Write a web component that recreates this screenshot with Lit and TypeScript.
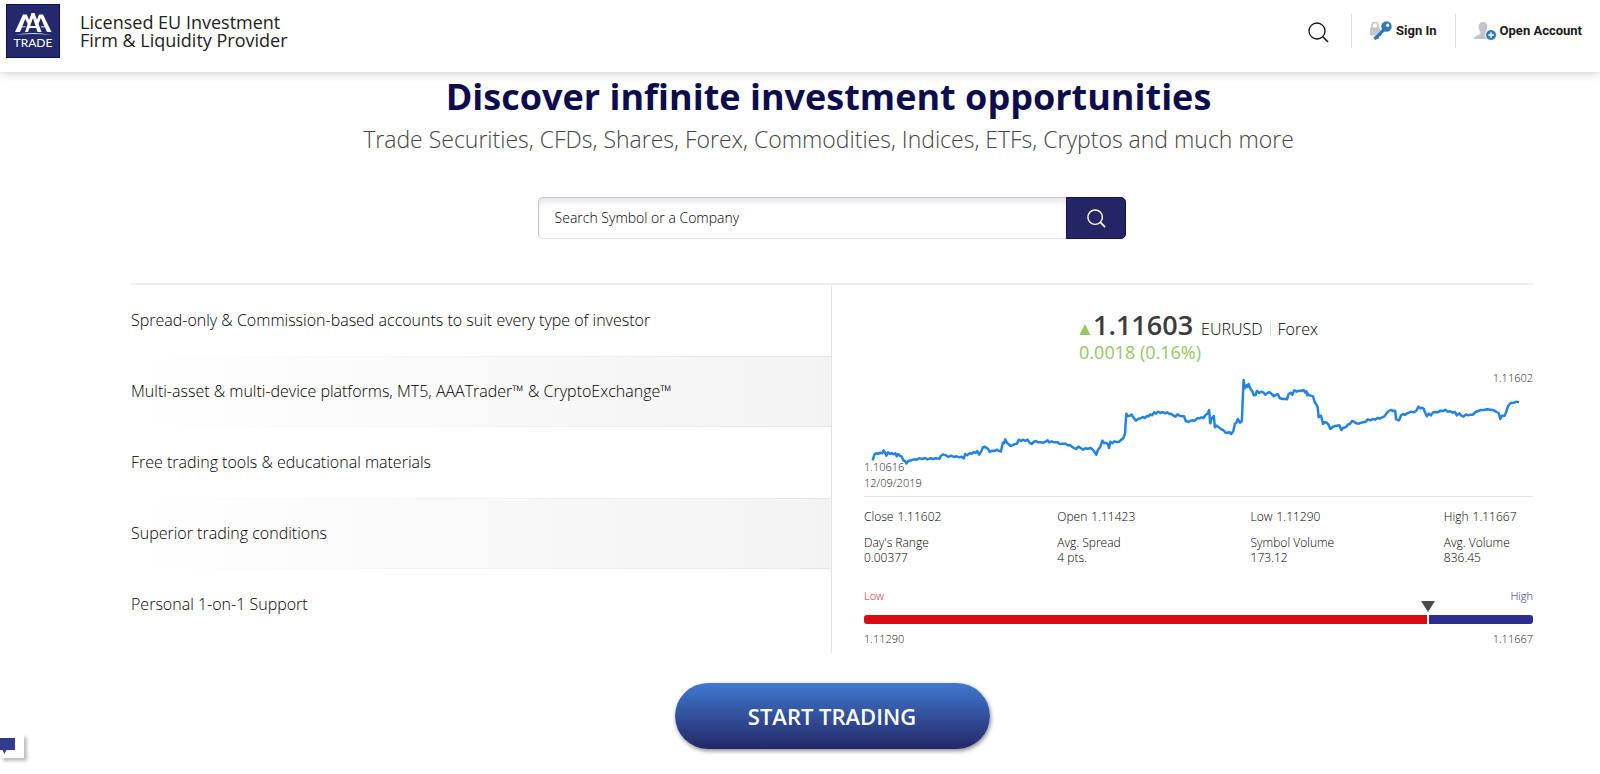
import { LitElement, html, css, svg } from "lit";
import { customElement } from "lit/decorators.js";

const FEATURES = [
  "Spread-only & Commission-based accounts to suit every type of investor",
  "Multi-asset & multi-device platforms, MT5, AAATrader™ & CryptoExchange™",
  "Free trading tools & educational materials",
  "Superior trading conditions",
  "Personal 1-on-1 Support",
];

const QUOTES: [string, string][] = [
  ["Close", "1.11602"],
  ["Open", "1.11423"],
  ["Low", "1.11290"],
  ["High", "1.11667"],
];

const STATS: [string, string][] = [
  ["Day's Range", "0.00377"],
  ["Avg. Spread", "4 pts."],
  ["Symbol Volume", "173.12"],
  ["Avg. Volume", "836.45"],
];

const SERIES =
  "71,511 76,494 82,489 87,492 92,488 99,490 104,481 108,488 112,497 117,487 123,492 128,489 133,493 139,490 143,499 147,492 152,497 158,500 163,511 168,513 172,520 178,513 186,511 195,508 203,509 210,505 220,507 228,504 235,508 243,505 252,507 260,505 271,506 276,497 282,493 290,496 298,501 306,497 314,501 322,499 330,502 336,500 344,505 348,492 354,496 361,490 368,491 374,486 379,489 384,483 390,494 396,485 401,472 407,470 413,474 418,479 422,486 429,482 436,483 443,479 449,483 455,485 461,458 465,459 468,448 473,458 478,462 484,468 490,466 497,462 503,461 509,449 515,453 521,449 528,453 535,449 541,458 547,462 553,456 560,453 566,457 574,457 582,458 589,455 595,451 600,457 607,454 615,457 625,457 631,462 640,461 648,461 656,466 662,465 668,470 674,474 680,477 687,470 694,474 701,479 708,475 716,476 724,474 731,480 736,487 741,494 746,479 753,470 759,452 764,459 771,459 775,462 779,474 783,455 789,460 795,454 802,456 809,455 815,450 822,444 827,430 829,395 831,371 836,378 842,377 847,374 852,383 860,392 867,386 874,385 880,381 887,384 892,378 898,379 902,373 908,376 914,367 920,371 926,365 933,369 940,366 947,370 953,367 960,372 965,371 972,377 978,380 984,373 990,377 997,379 1004,379 1009,393 1017,396 1023,392 1030,391 1036,392 1043,385 1050,385 1056,382 1062,384 1068,375 1073,372 1079,360 1082,400 1086,386 1093,378 1096,412 1102,407 1109,413 1115,418 1121,420 1128,428 1135,428 1139,426 1145,432 1151,424 1156,402 1161,397 1165,387 1171,398 1177,393 1179,340 1182,270 1186,295 1191,286 1194,290 1197,282 1203,297 1208,304 1213,316 1218,315 1222,303 1229,309 1235,305 1241,307 1247,314 1253,310 1259,306 1266,312 1273,319 1278,314 1285,313 1290,324 1298,327 1306,327 1312,328 1317,312 1323,308 1328,314 1334,301 1341,305 1348,302 1355,303 1362,300 1366,307 1370,304 1373,316 1371,306 1376,314 1383,317 1390,319 1395,336 1400,344 1404,352 1407,382 1414,377 1420,402 1425,396 1432,399 1437,405 1442,417 1449,411 1456,408 1462,407 1469,406 1475,420 1481,413 1488,412 1494,404 1500,402 1507,393 1513,395 1519,400 1527,401 1534,398 1540,397 1548,395 1554,388 1562,391 1569,387 1576,389 1583,384 1590,386 1597,382 1604,379 1610,370 1617,363 1623,360 1630,363 1636,362 1639,388 1648,391 1654,376 1660,372 1665,375 1672,370 1679,367 1685,365 1691,367 1699,363 1706,350 1711,355 1717,353 1722,357 1725,366 1731,379 1737,371 1743,376 1750,367 1757,366 1764,367 1772,362 1780,363 1786,359 1793,365 1801,364 1808,368 1815,366 1821,376 1828,370 1834,377 1841,380 1848,373 1855,376 1862,374 1869,374 1877,366 1885,363 1893,360 1902,360 1912,358 1922,359 1932,361 1940,366 1946,369 1951,387 1956,377 1964,377 1969,365 1974,349 1982,339 1992,338 2000,335 2007,337";

const magnifier = (color: string, width: number) => svg`
  <circle cx="9" cy="9" r="8" fill="none" stroke=${color} stroke-width=${width}></circle>
  <path d="M14.8 14.8L20 20" fill="none" stroke=${color} stroke-width=${width + 0.3}></path>`;

@customElement("site-header")
export class SiteHeader extends LitElement {
  static styles = css`
    :host {
      display: flex;
      align-items: center;
      justify-content: space-between;
      box-sizing: border-box;
      height: 72px;
      padding: 0 18px 10px 6px;
      background: #fff;
      box-shadow: 0 0 10px rgba(0, 0, 0, 0.25);
      position: relative;
    }
    .brand {
      display: flex;
      align-items: center;
      gap: 20px;
      color: #222;
      text-decoration: none;
      font-size: 18px;
      line-height: 18px;
    }
    .logo {
      display: block;
      width: 54px;
      height: 54px;
    }
    .nav {
      display: flex;
      align-items: center;
      font-family: Roboto, "Liberation Sans", sans-serif;
      font-size: 13px;
      line-height: 16px;
      font-weight: 700;
    }
    .find {
      display: block;
      padding: 2px 0 0;
      border: 0;
      background: none;
      margin-right: 22px;
    }
    .find svg {
      display: block;
      width: 21px;
      height: 21px;
    }
    .link {
      display: flex;
      align-items: center;
      gap: 4px;
      height: 34px;
      padding: 0 18px;
      border-left: 1px solid #ddd;
      color: #1a1a1a;
      text-decoration: none;
    }
    .link:last-child {
      padding-right: 0;
    }
    .link svg {
      display: block;
      width: 22px;
      height: 20px;
    }
  `;

  render() {
    return html`
      <a class="brand" href="#">
        <svg class="logo" viewBox="0 0 54 54" aria-hidden="true">
          <rect x="0.5" y="0.5" width="53" height="53" fill="#23296a" stroke="#0c0f5e"></rect>
          <g fill="#fff">
            <path d="M9 28L17 10.500H21L14 28Z"></path>
            <path d="M18.500 13.500L20.800 10.500L23.500 17L22 20.500Z"></path>
            <path d="M19 28L25.500 9H28.500L35.500 28H31.500L27 14L22 28Z"></path>
            <path d="M22.500 22H32V24H22.500Z"></path>
            <path d="M30.500 17L33 10.500H37L45.500 28H41L34.800 14L32.500 20Z"></path>
            <path d="M14 22H19.500V23.500H14ZM35 22H41V23.500H35Z" opacity="0.6"></path>
          </g>
          <path d="M9 31Q27 27 45 31Q27 29 9 31Z" fill="#cfd2e6"></path>
          <text x="27" y="43" text-anchor="middle" fill="#fff" font-family="Lato, sans-serif" font-size="12">TRADE</text>
        </svg>
        <span>Licensed EU Investment<br />Firm &amp; Liquidity Provider</span>
      </a>
      <nav class="nav">
        <button class="find" aria-label="Search">
          <svg viewBox="0 0 21 21">${magnifier("#111", 1.3)}</svg>
        </button>
        <a class="link" href="#">
          <svg viewBox="0 0 22 20" aria-hidden="true">
            <path d="M2 8V4.500a3 3 0 0 1 6 0V8" fill="none" stroke="#c3c5ca" stroke-width="1.700"></path>
            <rect x="0" y="6.500" width="10" height="8" rx="1" fill="#c3c5ca"></rect>
            <path d="M15 8L4 19" stroke="#fff" stroke-width="5"></path>
            <path d="M15 7.500L4.500 18" stroke="#2e78bd" stroke-width="3.200"></path>
            <path d="M6 15L8.500 17.500M9 12.500L11 14.500" stroke="#2e78bd" stroke-width="1.800"></path>
            <circle cx="16.500" cy="5.500" r="5.200" fill="#2e78bd"></circle>
            <circle cx="17.600" cy="4.300" r="1.700" fill="#fff"></circle>
          </svg>
          Sign In
        </a>
        <a class="link" href="#">
          <svg viewBox="0 0 22 20" aria-hidden="true">
            <path
              d="M9 1C12 1 13.500 3 13.400 6C13.300 8.500 12.200 10 11.500 11C11.300 13 12 13.600 14 14.500V18H0C0 15.500 2.500 14.800 5 13.800C6.400 13.200 6.600 12.500 6.400 11C5.400 9.800 4.700 8.500 4.600 6C4.500 3 6 1 9 1Z"
              fill="#c3c5ca"
            ></path>
            <circle cx="17" cy="14" r="5.500" fill="#2e78bd" stroke="#fff"></circle>
            <path d="M17 11.200V16.800M14.200 14H19.800" stroke="#fff" stroke-width="1.400"></path>
          </svg>
          Open Account
        </a>
      </nav>
    `;
  }
}

@customElement("symbol-search")
export class SymbolSearch extends LitElement {
  static styles = css`
    :host {
      display: block;
      width: 42%;
      min-width: 280px;
    }
    .form {
      display: flex;
      height: 42px;
    }
    .field {
      flex: 1;
      min-width: 0;
      box-sizing: border-box;
      margin: 0;
      padding: 0 16px;
      border: 1px solid #c5c4d4;
      border-bottom-color: #e2e1ea;
      border-right: 0;
      border-radius: 5px 0 0 5px;
      background: #fff;
      box-shadow: inset 0 5px 8px -3px rgba(0, 0, 0, 0.14);
      font: 300 14px/20px "Open Sans", sans-serif;
      color: #000;
      outline: none;
    }
    .field::placeholder {
      color: #000;
      opacity: 1;
    }
    .go {
      display: grid;
      place-items: center;
      width: 60px;
      padding: 0;
      border: 1px solid #11115c;
      border-radius: 0 5px 5px 0;
      background: #242565;
    }
    .go svg {
      width: 19px;
      height: 19px;
    }
  `;

  render() {
    return html`
      <form class="form" @submit=${(e: Event) => e.preventDefault()}>
        <input class="field" type="text" aria-label="Search Symbol or a Company" placeholder="Search Symbol or a Company" />
        <button class="go" aria-label="Search">
          <svg viewBox="0 0 21 21">${magnifier("#fff", 1.6)}</svg>
        </button>
      </form>
    `;
  }
}

@customElement("quote-panel")
export class QuotePanel extends LitElement {
  static styles = css`
    :host {
      display: block;
      padding: 25px 0 6px 32px;
      color: #000;
      font-size: 12px;
      line-height: 16px;
      font-weight: 300;
    }
    .head {
      display: grid;
      justify-content: center;
      margin-bottom: 10px;
    }
    .price {
      display: flex;
      align-items: baseline;
      font-size: 16px;
      line-height: 30px;
    }
    .up {
      width: 12px;
      height: 11px;
      margin-right: 2px;
    }
    .value {
      font-size: 27px;
      font-weight: 600;
      color: #3c3c3c;
      margin-right: 8px;
    }
    .market {
      margin-left: 7px;
      padding-left: 7px;
      line-height: 14px;
      border-left: 1px solid #ddd;
    }
    .change {
      font-size: 18px;
      line-height: 16px;
      font-weight: 400;
      color: #93c763;
    }
    .chart {
      display: grid;
      padding-bottom: 5px;
      border-bottom: 1px solid #e4e4e4;
      font-size: 11px;
      color: #222;
    }
    .plot {
      grid-area: 1 / 1;
      display: block;
      width: 100%;
      height: 100px;
      margin-bottom: 5px;
    }
    .plot polyline {
      fill: none;
      stroke: #2384e0;
      stroke-width: 2.5px;
      stroke-linejoin: round;
      vector-effect: non-scaling-stroke;
    }
    .last {
      grid-area: 1 / 1;
      justify-self: end;
    }
    .first {
      grid-area: 1 / 1;
      align-self: end;
    }
    .quotes,
    .stats {
      display: grid;
      grid-template-columns: 193fr 193fr 193fr 89fr;
      margin: 0;
      white-space: nowrap;
    }
    .quotes {
      margin-top: 12px;
    }
    .quote {
      display: flex;
      gap: 4px;
    }
    .stats {
      margin-top: 10px;
      line-height: 15px;
    }
    dt,
    dd {
      margin: 0;
    }
    .ends {
      display: flex;
      justify-content: space-between;
      font-size: 11px;
      color: #222;
    }
    .names {
      margin-top: 23px;
    }
    .low {
      color: #d5102c;
    }
    .high {
      color: #14188a;
    }
    .range {
      display: flex;
      gap: 2px;
      height: 9px;
      margin: 11px 0 7px;
    }
    .below {
      position: relative;
      background: #da0c10;
      border-radius: 3px 0 0 3px;
    }
    .below::after {
      content: "";
      position: absolute;
      right: -8px;
      top: -14px;
      border: 7px solid transparent;
      border-top: 11px solid #4a4a4a;
      border-bottom: 0;
    }
    .above {
      flex: 1;
      background: #2b2d90;
      border-radius: 0 3px 3px 0;
    }
  `;

  render() {
    return html`
      <div class="head">
        <div class="price">
          <svg class="up" viewBox="0 0 12 11" aria-hidden="true"><path d="M6 0L11.500 11H0.500Z" fill="#93c763"></path></svg>
          <span class="value">1.11603</span>
          <span>EURUSD</span>
          <span class="market">Forex</span>
        </div>
        <div class="change">0.0018 (0.16%)</div>
      </div>
      <div class="chart">
        <svg class="plot" viewBox="45 240 2004 300" preserveAspectRatio="none" role="img" aria-label="EURUSD price history">
          <polyline points=${SERIES}></polyline>
        </svg>
        <span class="last">1.11602</span>
        <span class="first">1.10616</span>
        <span>12/09/2019</span>
      </div>
      <dl class="quotes">
        ${QUOTES.map(([k, v]) => html`<div class="quote"><dt>${k}</dt><dd>${v}</dd></div>`)}
      </dl>
      <dl class="stats">
        ${STATS.map(([k, v]) => html`<div><dt>${k}</dt><dd>${v}</dd></div>`)}
      </dl>
      <div class="ends names"><span class="low">Low</span><span class="high">High</span></div>
      <div class="range">
        <div class="below" style="width:84.2%"></div>
        <div class="above"></div>
      </div>
      <div class="ends"><span>1.11290</span><span>1.11667</span></div>
    `;
  }
}

@customElement("app-root")
export class AppRoot extends LitElement {
  static styles = css`
    :host {
      display: block;
      min-height: 100vh;
      background: #fff;
      font-family: "Open Sans", sans-serif;
    }
    .main {
      display: flex;
      flex-direction: column;
      align-items: center;
      padding: 0 67px 0 131px;
    }
    .intro {
      padding-right: 7px;
      text-align: center;
    }
    .title {
      margin: 0;
      font-size: 36px;
      line-height: 50px;
      font-weight: 700;
      color: #0d0d4d;
    }
    .lead {
      margin: 0 0 40px;
      font-size: 23px;
      line-height: 35px;
      font-weight: 300;
      color: #444;
    }
    .columns {
      align-self: stretch;
      display: grid;
      grid-template-columns: 1fr 1fr;
      margin: 44px 0 30px;
      border-top: 2px solid #eee;
    }
    .features {
      list-style: none;
      margin: 0;
      padding: 0;
      border-right: 1px solid #e4e4e4;
      font-size: 16px;
      line-height: 22px;
      font-weight: 300;
      color: #000;
    }
    .feature {
      padding: 24px 0 25px;
    }
    .feature:nth-child(even) {
      background:
        linear-gradient(90deg, #fff, #e6e6e6) top / 100% 1px no-repeat,
        linear-gradient(90deg, #fff, #e6e6e6) bottom / 100% 1px no-repeat,
        linear-gradient(90deg, #fff, #f3f3f3);
    }
    .start {
      width: 315px;
      height: 66px;
      padding: 0;
      border: 0;
      border-radius: 33px;
      background: linear-gradient(#4079d0, #232766);
      box-shadow: 1px 2px 4px rgba(0, 0, 0, 0.45);
      color: #fff;
      font: 600 22px/30px "Open Sans", sans-serif;
    }
    .chat {
      position: fixed;
      left: 0;
      bottom: 16px;
      width: 24px;
      height: 24px;
      padding: 0;
      border: 0;
      background: #fff;
      box-shadow: 3px 3px 3px rgba(0, 0, 0, 0.25);
    }
    .chat svg {
      display: block;
      width: 15px;
      height: 16px;
    }
  `;

  render() {
    return html`
      <site-header></site-header>
      <main class="main">
        <header class="intro">
          <h1 class="title">Discover infinite investment opportunities</h1>
          <p class="lead">Trade Securities, CFDs, Shares, Forex, Commodities, Indices, ETFs, Cryptos and much more</p>
        </header>
        <symbol-search></symbol-search>
        <section class="columns">
          <ul class="features">
            ${FEATURES.map((f) => html`<li class="feature">${f}</li>`)}
          </ul>
          <quote-panel></quote-panel>
        </section>
        <button class="start">START TRADING</button>
      </main>
      <button class="chat" aria-label="Open chat">
        <svg viewBox="0 0 15 16" aria-hidden="true"><path d="M0 0H15V12H6.500L4.500 16L2.500 12H0Z" fill="#353b8c"></path></svg>
      </button>
    `;
  }
}
